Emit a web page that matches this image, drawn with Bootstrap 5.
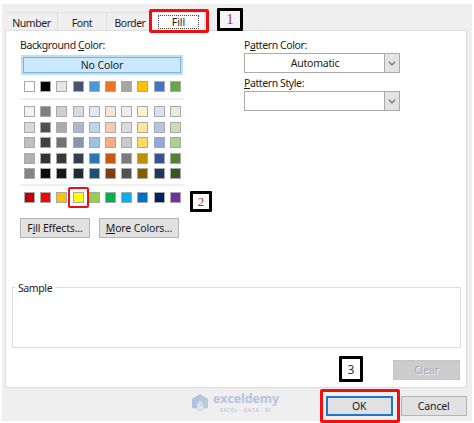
<!DOCTYPE html>
<html lang="en">
<head>
<meta charset="utf-8">
<title>Format Cells</title>
<link href="https://cdn.jsdelivr.net/npm/bootstrap@5.3.0/dist/css/bootstrap.min.css" rel="stylesheet">
<style>
body{width:474px;height:423px;overflow:hidden;background:#fff;font-family:"Noto Sans","Open Sans",sans-serif;font-size:10.5px;line-height:14px;color:#1c1c1c;letter-spacing:-.1px}
u{text-underline-offset:1px}
.dialog{width:470px;height:417px;margin:4px 0 0 2px;padding:8px 5px 0 3px;background:#efefef}
.tabs{height:18px;padding-left:1px}
.tab{height:18px;padding-top:3px;border-top:1px solid #e3e3e3;border-right:1px solid #dedede;text-align:center;letter-spacing:-.4px}
.t1{width:52px}.t2{width:49px}.t3{width:46px;border-right:0;font-size:10.3px}.t4{width:52px;background:#fff;padding-top:2px}
.focus-box{width:41px;height:14px;border:1px dotted #444;line-height:12px;letter-spacing:0}
.panel{width:462px;height:358px;background:#fff;border:1px solid #dcdcdc;padding:7px 6px 0 6px}
.left{width:164px;margin-left:8px}
.right{width:156px;margin-left:60px}
.caption{letter-spacing:-.4px}
.right .caption{height:13px}
.second-label{margin-top:3px}
.nocolor{height:20px;width:162px;margin:3px 0 0 1px;border:2px solid #bcdff4;background:#cce8ff}
.nocolor>div{height:16px;border:1px solid #82b3d2;line-height:15px;text-align:center}
.swatches{display:grid;grid-template-columns:repeat(10,11px);column-gap:5.2px;row-gap:4.5px;margin:6px 0 0 4px}
.swatches i{height:11px;border:1px solid #a9a9a9;display:block}
.rule{height:2px;background:#eef0f2;width:164px;margin-top:6px}
.rule-low{margin-top:5px}
.dlg-btn{height:20px;border:1px solid #b4b4b4;background:#e1e1e1;border-radius:0;padding:0;font-size:10.5px;line-height:17px;color:#1c1c1c;text-align:center;letter-spacing:-.15px}
.actions{margin-top:15px;gap:9px}
.effects{width:70px}.more{width:80px}
.combo{height:20px;border:1px solid #aaa;background:#fff;margin-top:2px}
.combo span{line-height:18px;letter-spacing:-.25px}
.combo div{width:16px;background:#e3e3e3;border:1px solid #aaa;margin:-1px}
.sample{width:449px;height:61px;border:1px solid #dedede;margin-top:49px}
.sample span{background:#fff;padding:0 3px;margin:-7px 0 0 2px;letter-spacing:-.4px}
.clear-row{margin-top:12px}
.clear-btn{width:67px;background:#ccc;border-color:#c6c6c6;color:#aaa;text-shadow:1px 1px #f4f4f4}
.footer-row{height:33px}
.brand{color:#b6c3e0;width:90px;margin-left:186px;padding-top:5px;flex:none}
.brand b{font:700 12.5px/14px "Open Sans",sans-serif;height:14px;margin-top:-1px}
.brand small{font:600 5.2px/6px "Open Sans",sans-serif;letter-spacing:.5px;color:#c0c5cf;padding-left:7px;white-space:nowrap;margin-top:1px}
.ok-btn{width:67px;margin:8px 0 0 45px;border:2px solid #1c78cf;line-height:15px}
.cancel-btn{width:67px;margin:8px 0 0 8px}
.note{position:absolute;border:3px solid #000;background:#fff;color:#b02a2a;font:13px/15px "Liberation Serif",serif;display:flex;align-items:center;justify-content:center;border-radius:1px}
.n1{left:217px;top:8px;width:26px;height:23px;background:#f4f4f4;font-size:14px}
.n2{left:190px;top:191px;width:22px;height:21px}
.n3{left:339px;top:356px;width:24px;height:26px;color:#333;font:12px "Noto Sans",sans-serif}
.mark-red{position:absolute;border:3px solid #f00e12;border-radius:2px}
.m1{left:149px;top:9px;width:60px;height:24px}
.m2{left:68px;top:187px;width:21px;height:21px;border-width:2px}
.m3{left:320px;top:389px;width:80px;height:34px}
</style>
<script src="https://cdn.jsdelivr.net/npm/bootstrap@5.3.0/dist/js/bootstrap.bundle.min.js"></script>
</head>
<body class="position-relative">
<main class="dialog">
  <nav class="tabs d-flex">
    <div class="tab t1">Number</div><div class="tab t2">Font</div><div class="tab t3">Border</div>
    <div class="tab t4 d-flex justify-content-center"><div class="focus-box">Fill</div></div>
  </nav>
  <section class="panel">
    <div class="d-flex">
      <div class="left">
        <div class="caption">Background <u>C</u>olor:</div>
        <div class="nocolor"><div>No Color</div></div>
        <div class="swatches" id="theme"></div>
        <div class="rule"></div>
        <div class="swatches" id="shades"></div>
        <div class="rule rule-low"></div>
        <div class="swatches" id="standard"></div>
        <div class="actions d-flex">
          <button class="btn dlg-btn effects">F<u>i</u>ll Effects...</button>
          <button class="btn dlg-btn more"><u>M</u>ore Colors...</button>
        </div>
      </div>
      <div class="right">
        <div class="caption">P<u>a</u>ttern Color:</div>
        <div class="combo d-flex"><span class="flex-grow-1 text-center">Automatic</span><div class="d-flex align-items-center justify-content-center"><svg width="8" height="5" viewBox="0 0 8 5" fill="none" stroke="#666" stroke-width="1.2"><path d="M.8.7 4 3.9 7.2.7"/></svg></div></div>
        <div class="caption second-label"><u>P</u>attern Style:</div>
        <div class="combo d-flex"><span class="flex-grow-1"></span><div class="d-flex align-items-center justify-content-center"><svg width="8" height="5" viewBox="0 0 8 5" fill="none" stroke="#666" stroke-width="1.2"><path d="M.8.7 4 3.9 7.2.7"/></svg></div></div>
      </div>
    </div>
    <div class="sample d-flex align-items-start"><span>Sample</span></div>
    <div class="clear-row d-flex justify-content-end"><button class="btn dlg-btn clear-btn">Clear</button></div>
  </section>
  <footer class="footer-row d-flex align-items-start">
    <div class="brand d-flex"><svg width="18" height="20" viewBox="0 0 18 20"><path d="M1 6 9 1l8 5v9l-8 4-8-4z" fill="#dce4e9"/><path d="M1 6 9 1v8l-3 2v4H1z" fill="#b3c2e2"/><path d="m9 1 8 5v9h-4l-4-6z" fill="#b9cad2"/><path d="M7 9q2-3 4 0l2 5-3-1z" fill="#d3ddec"/></svg>
      <div class="d-flex flex-column ps-1"><b>exceldemy</b><small>EXCEL - DATA - BI</small></div></div>
    <button class="btn dlg-btn ok-btn">OK</button>
    <button class="btn dlg-btn cancel-btn">Cancel</button>
  </footer>
</main>
<div class="mark-red m1"></div><div class="mark-red m2"></div><div class="mark-red m3"></div>
<div class="note n1">1</div><div class="note n2">2</div><div class="note n3">3</div>
<script>
const palettes={
theme:"fff 000 e7e6e6 44546a 4c97d8 ed7424 a5a5a5 ffc000 4472c4 68a842",
shades:"f2f2f2 7f7f7f d0cece d6dce4 ddebf7 fce4d6 ededed fff2cc d9e1f2 e2efda d9d9d9 505050 aeaaaa acb9ca bdd7ee f8cbad dbdbdb ffe699 b4c6e7 c6e0b4 bfbfbf 404040 757171 8497b0 9bc2e6 f4b084 c9c9c9 ffd966 8ea9db a9d08e b2b2b2 333333 3a3838 333f4f 2f75b5 c65911 7b7b7b bf8f00 305496 548235 858585 0d0d0d 161616 222b35 1f4e78 833c0c 525252 806000 203764 375623",
standard:"c00000 f00 ffc000 ff0 92d050 00b050 00b0f0 0070c0 002060 7030a0"};
for(const id in palettes)for(const c of palettes[id].split(" ")){const s=document.createElement("i");s.style.backgroundColor="#"+c;document.getElementById(id).append(s)}
</script>
</body>
</html>
